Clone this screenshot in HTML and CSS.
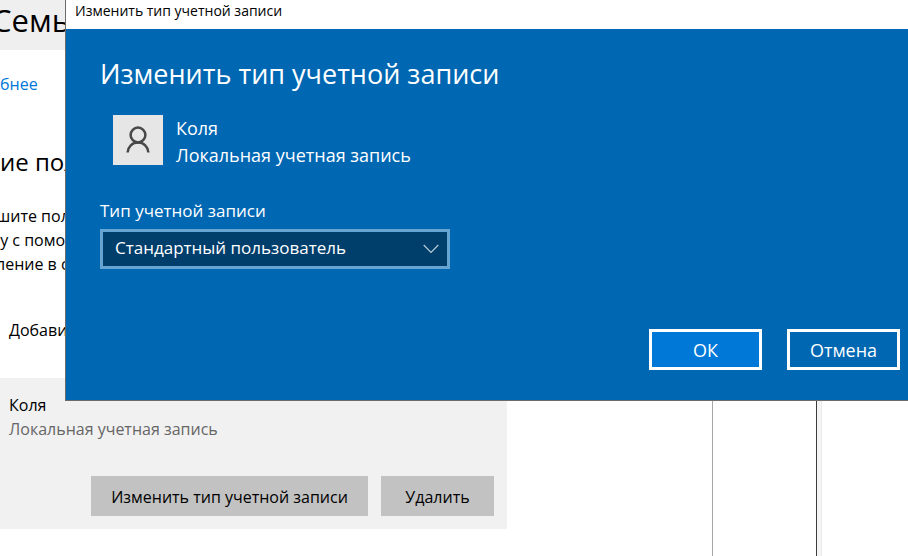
FILE: index.html
```html
<!DOCTYPE html>
<html lang="ru">
<head>
<meta charset="utf-8">
<title>Изменить тип учетной записи</title>
<link rel="stylesheet" href="styles.css">
</head>
<body>
<div class="desktop">
  <main class="settings">
    <header class="settings-header"><h1>Семь</h1></header>
    <section class="content">
      <a class="more" href="#">бнее</a>
      <h2>ие пол</h2>
      <p class="hint">шите пол<br>&nbsp;у с помо<br>ление в с</p>
      <p class="add">Добави</p>
    </section>
    <section class="account">
      <p class="account-name">Коля</p>
      <p class="account-kind">Локальная учетная запись</p>
      <div class="account-actions">
        <button class="grey wide" type="button">Изменить тип учетной записи</button>
        <button class="grey" type="button">Удалить</button>
      </div>
    </section>
  </main>
  <div class="pane"></div>
  <div class="edge"><div class="edge-strip"></div></div>
</div>
<div class="dialog" role="dialog" aria-labelledby="dialog-title">
  <div class="titlebar">Изменить тип учетной записи</div>
  <form class="dialog-body">
    <h2 class="dialog-title" id="dialog-title">Изменить тип учетной записи</h2>
    <div class="user">
      <div class="avatar">
        <svg width="24" height="28" viewBox="0 0 24 28" fill="none" stroke="#484848" stroke-width="2.5" aria-hidden="true">
          <circle cx="12" cy="9" r="7.4"/>
          <path d="M1.6 26.5C2 20.8 6.2 16.6 12 16.6S22 20.8 22.4 26.5"/>
        </svg>
      </div>
      <div class="user-text"><p>Коля</p><p>Локальная учетная запись</p></div>
    </div>
    <label for="type">Тип учетной записи</label>
    <div class="select">
      <select id="type"><option>Стандартный пользователь</option><option>Администратор</option></select>
      <svg class="chevron" width="16" height="10" viewBox="0 0 16 10" fill="none" stroke="#b8cbd8" stroke-width="1.2" aria-hidden="true"><path d="M.7 1 8 8.5 15.3 1"/></svg>
    </div>
    <div class="dialog-actions">
      <button class="primary" type="button">ОК</button>
      <button type="button">Отмена</button>
    </div>
  </form>
</div>
</body>
</html>
```
FILE: styles.css
```css
* { box-sizing: border-box; }
body {
  margin: 0;
  background: #fff;
  color: #000;
  font: 16px/24px "Open Sans", "Noto Sans", sans-serif;
  overflow: hidden;
}
h1, h2, p { margin: 0; font-weight: 400; }
button, select { font: inherit; margin: 0; border-radius: 0; }
.desktop { display: flex; min-height: 100vh; }
.settings { flex: 1; min-width: 0; }
.settings-header {
  height: 50px;
  margin-left: -8px;
  background: #efefef;
}
.settings-header h1 { font-size: 31px; line-height: 40px; }
.content { margin-left: -4px; white-space: nowrap; }
.more { display: block; padding: 22px 4px 0; color: #0078d7; text-decoration: none; }
.content h2 { padding: 50px 4px 0; font-size: 24px; line-height: 32px; }
.hint { padding-top: 26px; }
.add { padding: 42px 13px 36px; }
.account {
  width: 507px;
  padding: 15px 13px 13px 9px;
  background: #f1f1f1;
}
.account-kind { color: #666; }
.account-actions { display: flex; justify-content: flex-end; gap: 13px; padding-top: 35px; }
.grey { width: 113px; height: 40px; padding: 2px 0 0; border: 0; background: #c2c2c2; color: #000; white-space: nowrap; }
.grey.wide { width: 277px; }
.pane { width: 104px; border-left: 1px solid #a6a6a6; }
.edge { width: 92px; border-left: 1px solid #3c3c3c; }
.edge-strip { width: 5px; height: 100%; background: #f5f5f5; border-right: 1px solid #eaeaea; }
.dialog {
  position: absolute;
  top: 0;
  left: 65px;
  right: 0;
  border: solid #6b6b6b;
  border-width: 0 0 1px 1px;
  background: #0067b3;
  color: #fff;
}
.titlebar { height: 29px; padding-left: 9px; background: #fff; color: #000; font-size: 14px; line-height: 22px; }
.dialog-body { padding: 26px 8px 30px 34px; font-size: 18px; }
.dialog-title { font-size: 27px; line-height: 38px; }
.user { display: flex; gap: 13px; padding: 22px 13px 0; }
.avatar { display: grid; place-items: center; width: 50px; height: 50px; background: #e6e6e6; }
.user-text { line-height: 27px; font-weight: 500; }
.dialog label { display: block; padding: 30px 0 6px; font-size: 17px; line-height: 24px; }
.select { position: relative; width: 350px; }
.select select {
  display: block;
  width: 100%;
  height: 40px;
  padding: 0 12px 2px;
  border: 3px solid #66a4d1;
  appearance: none;
  background: #003e6b;
  color: #fff;
  font-size: 17px;
}
.chevron { position: absolute; right: 11px; top: 15px; }
.dialog-actions { display: flex; justify-content: flex-end; gap: 25px; padding-top: 60px; }
.dialog-actions button { width: 113px; height: 41px; padding: 0; border: 3px solid #fff; background: #0067b3; color: #fff; }
.dialog-actions .primary { background: #0078d7; }
```
